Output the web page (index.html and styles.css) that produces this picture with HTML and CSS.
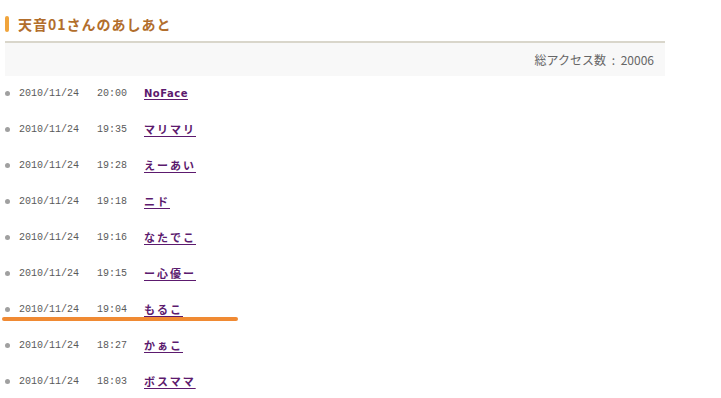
FILE: index.html
```html
<!DOCTYPE html>
<html lang="ja">
<head>
<meta charset="utf-8">
<link rel="stylesheet" href="styles.css">
</head>
<body>
<div class="page">
  <h2 class="title"><span class="title-bar"></span>天音01さんのあしあと</h2>
  <div class="counter">総アクセス数 : 20006</div>
  <ul class="list">
    <li class="row"><span class="dot"></span><span class="date">2010/11/24</span><span class="time">20:00</span><a class="name latin" href="#">NoFace</a></li>
    <li class="row"><span class="dot"></span><span class="date">2010/11/24</span><span class="time">19:35</span><a class="name" href="#">マリマリ</a></li>
    <li class="row"><span class="dot"></span><span class="date">2010/11/24</span><span class="time">19:28</span><a class="name" href="#">えーあい</a></li>
    <li class="row"><span class="dot"></span><span class="date">2010/11/24</span><span class="time">19:18</span><a class="name" href="#">ニド</a></li>
    <li class="row"><span class="dot"></span><span class="date">2010/11/24</span><span class="time">19:16</span><a class="name" href="#">なたでこ</a></li>
    <li class="row"><span class="dot"></span><span class="date">2010/11/24</span><span class="time">19:15</span><a class="name" href="#">ー心優ー</a></li>
    <li class="row marked"><span class="dot"></span><span class="date">2010/11/24</span><span class="time">19:04</span><a class="name" href="#">もるこ</a><span class="mark"></span></li>
    <li class="row"><span class="dot"></span><span class="date">2010/11/24</span><span class="time">18:27</span><a class="name" href="#">かぁこ</a></li>
    <li class="row"><span class="dot"></span><span class="date">2010/11/24</span><span class="time">18:03</span><a class="name" href="#">ボスママ</a></li>
  </ul>
</div>
</body>
</html>
```

FILE: styles.css
```css
html, body {
  margin: 0;
  padding: 0;
  background: #ffffff;
}
body {
  font-family: "Liberation Mono", "Noto Sans CJK JP", monospace;
}
.page {
  width: 660px;
  padding: 16px 0 0 5px;
}
.title {
  display: flex;
  align-items: center;
  margin: 0;
  height: 16px;
  font-family: "Noto Sans CJK JP", sans-serif;
  font-size: 14px;
  font-weight: bold;
  letter-spacing: 1px;
  color: #b26e2c;
  line-height: 16px;
}
.title-bar {
  display: block;
  width: 4px;
  height: 16px;
  border-radius: 2px;
  background: #f0a43c;
  margin-right: 9px;
}
.counter {
  margin-top: 9px;
  border-top: 2px solid #d9d6cb;
  background: #f8f8f8;
  height: 33px;
  line-height: 33px;
  text-align: right;
  padding-right: 11px;
  font-family: "Noto Sans CJK JP", sans-serif;
  font-size: 12px;
  word-spacing: 3px;
  color: #666666;
}
.list {
  list-style: none;
  margin: -1px 0 0 0;
  padding: 0;
}
.row {
  position: relative;
  display: flex;
  align-items: center;
  height: 36px;
  font-size: 10px;
  color: #5a5a5a;
  margin-left: -3px;
}
.dot {
  width: 5px;
  height: 5px;
  border-radius: 50%;
  background: #a0a0a0;
  margin-right: 9px;
  margin-left: 3px;
}
.date {
  width: 78px;
}
.time {
  width: 47px;
}
.name {
  font-family: "Noto Sans CJK JP", sans-serif;
  font-size: 11px;
  font-weight: bold;
  letter-spacing: 2px;
  color: #5c1a6e;
  text-decoration: underline;
  text-underline-offset: 2px;
}
.latin {
  font-family: "DejaVu Sans", sans-serif;
  font-size: 10px;
  letter-spacing: 0.5px;
}
.mark {
  position: absolute;
  left: 0;
  top: 26px;
  width: 236px;
  height: 4px;
  border-radius: 2px;
  background: #f08a33;
}
```
